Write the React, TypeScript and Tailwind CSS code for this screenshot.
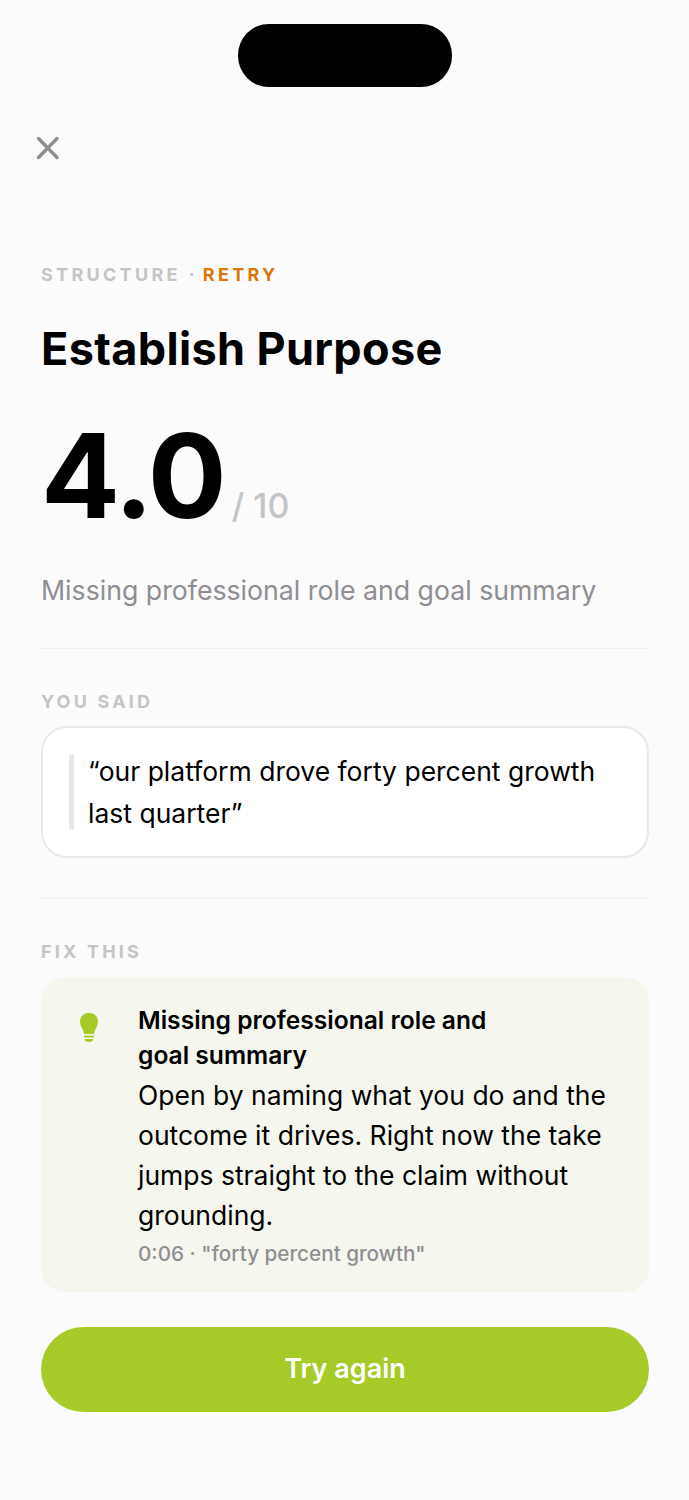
import React from 'react';

function SectionLabel({ children }: { children: React.ReactNode }) {
    return (
        <p className="text-[18px] leading-[22px] font-bold tracking-[3.2px] text-[#c4c4c6]">
            {children}
        </p>
    );
}

function Bulb() {
    return (
        <svg width="20" height="30" viewBox="0 0 20 30" className="text-[#a6ca27]">
            <path
                fill="currentColor"
                d="M10 0C4.5 0 1 3.6 1 8.4c0 3.6 2 6.6 3.2 9.6.4 1 .7 2 .9 3h9.8c.2-1 .5-2 .9-3 1.2-3 3.2-6 3.2-9.6C19 3.6 15.5 0 10 0Z"
            />
            <rect x="5" y="22.6" width="10" height="1.8" rx="0.9" fill="currentColor" />
            <path fill="currentColor" d="M5.6 26h8.8c-.3 1.8-1.6 3-4.4 3s-4.1-1.2-4.4-3Z" />
        </svg>
    );
}

export default function App() {
    return (
        <div className="h-[1500px] w-[689px] overflow-hidden bg-[#fbfbfc] font-['Inter',sans-serif] text-black">
            <div className="flex justify-center pt-6">
                <div className="h-[63px] w-[214px] rounded-[31px] bg-black" />
            </div>

            <div className="pr-[40px] pl-[41px]">
                {/* Close */}
                <button className="mt-[47px] -ml-[8px] flex h-[30px] w-[30px] items-center justify-center text-[#8e8e92]">
                    <svg width="30" height="30" viewBox="0 0 30 30" fill="none">
                        <path
                            d="M5.5 4.5 L24 23.5 M24 4.5 L5.5 23.5"
                            stroke="currentColor"
                            strokeWidth="3.4"
                            strokeLinecap="round"
                        />
                    </svg>
                </button>

                <p className="mt-[100px] text-[18px] leading-[22px] font-bold tracking-[3.3px] text-[#c4c4c6]">
                    STRUCTURE<span className="mx-[8px] tracking-normal">·</span>
                    <span className="text-[#dc7609]">RETRY</span>
                </p>

                <h1 className="mt-[35px] text-[45px] leading-[56px] font-bold tracking-[0.35px]">
                    Establish Purpose
                </h1>

                <div className="mt-[28px] flex items-baseline gap-[7px]">
                    <span className="text-[117px] leading-[142px] font-bold tracking-[-2px]">4.0</span>
                    <span className="text-[34px] leading-[40px] font-medium text-[#c4c4c6]">/ 10</span>
                </div>

                <p className="mt-[24px] text-[26.7px] leading-[38px] text-[#8e8e92]">
                    Missing professional role and goal summary
                </p>

                <div className="mt-[39px] h-px bg-[#f0f0f2]" />

                <div className="mt-[42px]">
                    <SectionLabel>YOU SAID</SectionLabel>
                </div>

                <div className="mt-[13px] rounded-[26px] border-2 border-[#e8e8ec] bg-white py-[26px] pr-[24px] pl-[26px]">
                    <div className="flex gap-[14px]">
                        <div className="w-[5px] shrink-0 rounded-full bg-[#e5e5ea]" />
                        <p className="-my-[4px] text-[26.5px] leading-[42px]">
                            “our platform drove forty percent growth last quarter”
                        </p>
                    </div>
                </div>

                <div className="mt-[40px] h-px bg-[#f0f0f2]" />

                <div className="mt-[42px]">
                    <SectionLabel>FIX THIS</SectionLabel>
                </div>

                <div className="mt-[14px] flex rounded-[24px] bg-[#f5f6ee] pt-[26px] pr-[30px] pb-[23px] pl-[38px]">
                    <div className="w-[59px] shrink-0 pt-[10px]">
                        <Bulb />
                    </div>
                    <div className="min-w-0">
                        <p className="max-w-[400px] text-[24.6px] leading-[35px] font-semibold">
                            Missing professional role and goal summary
                        </p>
                        <p className="mt-[2px] text-[26.5px] leading-[40px]">
                            Open by naming what you do and the outcome it drives. Right now the take jumps straight to the claim without grounding.
                        </p>
                        <p className="mt-[4px] text-[20.7px] leading-[30px] font-medium text-[#8e8e92]">
                            0:06 · "forty percent growth"
                        </p>
                    </div>
                </div>

                <button className="mt-[35px] flex h-[85px] w-full items-center justify-center rounded-[43px] bg-[#a6ca27] text-[27px] font-semibold text-white">
                    Try again
                </button>
            </div>
        </div>
    );
}
